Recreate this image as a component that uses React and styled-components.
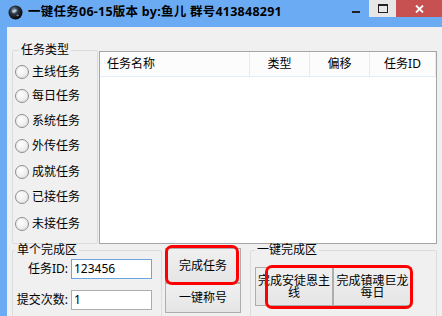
import React from 'react';
import styled, { createGlobalStyle } from 'styled-components';

const Global = createGlobalStyle`
  html, body {
    margin: 0;
    padding: 0;
  }
  body {
    width: 442px;
    height: 316px;
    overflow: hidden;
    font-family: "Noto Sans", "Noto Sans CJK SC", sans-serif;
    font-size: 12px;
    color: #000;
  }
`;

const Window = styled.div`
  display: flex;
  flex-direction: column;
  width: 442px;
  height: 316px;
  background: #6aabf4;
`;

const TitleBar = styled.div`
  display: flex;
  align-items: flex-start;
  height: 27px;
  flex-shrink: 0;
`;

const AppIcon = styled.div`
  display: flex;
  margin: 5px 0 0 8px;
  width: 15px;
  height: 15px;
`;

const Title = styled.div`
  margin: 3px 0 0 5px;
  font-family: "Noto Sans", "Noto Sans CJK SC", sans-serif;
  font-weight: bold;
  font-size: 12.5px;
  letter-spacing: 0.25px;
  line-height: 17px;
  white-space: nowrap;
`;

const Controls = styled.div`
  display: flex;
  margin-left: auto;
  height: 17px;
`;

const CtrlBtn = styled.div`
  display: flex;
  align-items: center;
  justify-content: center;
  width: ${p => p.$w}px;
  height: 17px;
  background: ${p => p.$bg || 'transparent'};
`;

const MinGlyph = styled.div`
  width: 8px;
  height: 2px;
  margin-top: 6px;
  background: #222;
`;

const MaxGlyph = styled.div`
  width: 8px;
  height: 6px;
  border: 1px solid #222;
  border-top-width: 2px;
`;

const Client = styled.div`
  flex: 1;
  margin-left: 7px;
  background: #f0f0f0;
  padding: 16px 5px 0 5px;
  display: flex;
  flex-direction: column;
  overflow: hidden;
`;

const TopRow = styled.div`
  display: flex;
  align-items: flex-start;
  height: 200px;
`;

const Group = styled.fieldset`
  margin: 0;
  padding: 0;
  box-sizing: border-box;
  border: 1px solid #dcdcdc;
  border-radius: 2px;
  width: ${p => p.$w ? `${p.$w}px` : 'auto'};
  flex: ${p => p.$w ? 'none' : 1};
  height: ${p => p.$h}px;
  margin-left: ${p => p.$ml || 0}px;
  min-width: 0;
`;

const Legend = styled.legend`
  margin-left: ${p => p.$ml}px;
  padding: 0 2px;
  font-size: 12px;
  line-height: 14px;
`;

const RadioList = styled.div`
  display: flex;
  flex-direction: column;
  padding: 3px 0 0 2px;
`;

const RadioRow = styled.label`
  display: flex;
  align-items: center;
  gap: 3px;
  height: ${p => p.$h}px;
  line-height: 14px;
`;

const RadioDot = styled.span`
  width: 12px;
  height: 12px;
  border-radius: 50%;
  border: 1px solid #8e8e8e;
  background: radial-gradient(circle at 40% 35%, #ffffff 0%, #f0f0f0 50%, #d8d8d8 100%);
`;

const ListView = styled.div`
  margin: 8px 0 0 1px;
  width: 339px;
  height: 193px;
  box-sizing: border-box;
  border: 1px solid #a5a5a5;
  background: #fff;
`;

const HeaderRow = styled.div`
  display: flex;
  height: 24px;
  background: #fcfcfd;
  border-bottom: 1px solid #e4ecf7;
`;

const HeaderCell = styled.div`
  display: flex;
  align-items: center;
  justify-content: ${p => p.$left ? 'flex-start' : 'center'};
  padding-left: ${p => p.$left ? 7 : 0}px;
  width: ${p => p.$w}px;
  box-sizing: border-box;
  border-right: 1px solid #e3ebf6;
  line-height: 14px;
`;

const BottomRow = styled.div`
  display: flex;
  align-items: flex-start;
`;

const FormBody = styled.div`
  display: flex;
  flex-direction: column;
  gap: 11px;
  padding-top: 2px;
`;

const FormRow = styled.div`
  display: flex;
  align-items: center;
`;

const FieldLabel = styled.span`
  width: 55px;
  margin-right: 3px;
  text-align: right;
  line-height: 14px;
  white-space: nowrap;
`;

const TextBox = styled.div`
  width: 81px;
  height: 20px;
  box-sizing: border-box;
  border: 1px solid ${p => p.$focus ? '#6aa5e0' : '#acacac'};
  background: #fff;
  padding-left: 2px;
  display: flex;
  align-items: center;
  line-height: 14px;
`;

const ButtonCol = styled.div`
  position: relative;
  display: flex;
  flex-direction: column;
  width: 76px;
  margin: 5px 0 0 3px;
`;

const Button = styled.div`
  display: flex;
  align-items: center;
  justify-content: center;
  text-align: center;
  box-sizing: border-box;
  width: ${p => p.$w}px;
  height: ${p => p.$h}px;
  border: 1px solid #adadad;
  background: linear-gradient(#f0f0f0, #e5e5e5);
  font-size: 12px;
  line-height: 12px;
  padding: 0 1px;
  word-break: break-all;
`;

const ButtonPair = styled.div`
  position: relative;
  display: flex;
  padding: 10px 0 0 4px;
`;

const Highlight = styled.div`
  position: absolute;
  left: ${p => p.$x}px;
  top: ${p => p.$y}px;
  width: ${p => p.$w}px;
  height: ${p => p.$h}px;
  box-sizing: border-box;
  border: 3px solid #f00;
  border-radius: 7px;
  pointer-events: none;
`;

const radios = ['主线任务', '每日任务', '系统任务', '外传任务', '成就任务', '已接任务', '未接任务'];
const radioHeights = [24, 24, 25, 26, 25, 26, 27];

const columns = [
  { name: '任务名称', w: 150, left: true },
  { name: '类型', w: 60 },
  { name: '偏移', w: 60 },
  { name: '任务ID', w: 66 },
];

const Globe = () => (
  <svg width="15" height="15" viewBox="0 0 15 15">
    <defs>
      <radialGradient id="g" cx="40%" cy="35%" r="65%">
        <stop offset="0%" stopColor="#8ea4b8" />
        <stop offset="45%" stopColor="#2b3440" />
        <stop offset="100%" stopColor="#050607" />
      </radialGradient>
    </defs>
    <circle cx="7.5" cy="7.5" r="7" fill="url(#g)" />
    <path d="M4 6 Q6 3.5 9 5 Q8 7 6 8 Q4.5 8 4 6Z" fill="#c9d6e2" opacity="0.85" />
    <path d="M8 10 Q10 9 11 10.5 Q9.5 12 8 10Z" fill="#9fb2c4" opacity="0.7" />
  </svg>
);

export default function App() {
  return (
    <>
      <Global />
      <Window>
        <TitleBar>
          <AppIcon><Globe /></AppIcon>
          <Title>一键任务06-15版本 by:鱼儿 群号413848291</Title>
          <Controls>
            <CtrlBtn $w={26}><MinGlyph /></CtrlBtn>
            <CtrlBtn $w={27} $bg="#e6e6e6"><MaxGlyph /></CtrlBtn>
            <CtrlBtn $w={46} $bg="#c75050">
              <svg width="9" height="8" viewBox="0 0 9 8">
                <path d="M1 0.5 L8 7.5 M8 0.5 L1 7.5" stroke="#fff" strokeWidth="1.8" />
              </svg>
            </CtrlBtn>
          </Controls>
        </TitleBar>
        <Client>
          <TopRow>
            <Group $w={86} $h={201}>
              <Legend $ml={6}>任务类型</Legend>
              <RadioList>
                {radios.map((r, i) => (
                  <RadioRow key={r} $h={radioHeights[i]}>
                    <RadioDot />
                    {r}
                  </RadioRow>
                ))}
              </RadioList>
            </Group>
            <ListView>
              <HeaderRow>
                {columns.map(c => (
                  <HeaderCell key={c.name} $w={c.w} $left={c.left}>{c.name}</HeaderCell>
                ))}
              </HeaderRow>
            </ListView>
          </TopRow>
          <BottomRow>
            <Group $w={150} $h={90}>
              <Legend $ml={2}>单个完成区</Legend>
              <FormBody>
                <FormRow>
                  <FieldLabel>任务ID:</FieldLabel>
                  <TextBox $focus>123456</TextBox>
                </FormRow>
                <FormRow>
                  <FieldLabel>提交次数:</FieldLabel>
                  <TextBox>1</TextBox>
                </FormRow>
              </FormBody>
            </Group>
            <ButtonCol>
              <Button $w={76} $h={35}>完成任务</Button>
              <Button $w={76} $h={30}>一键称号</Button>
              <Highlight $x={0} $y={-3} $w={74} $h={40} />
            </ButtonCol>
            <Group $h={90} $ml={9}>
              <Legend $ml={4}>一键完成区</Legend>
              <ButtonPair>
                <Button $w={78} $h={39}>完成安徒恩主线</Button>
                <Button $w={79} $h={39}>完成镇魂巨龙每日</Button>
                <Highlight $x={14} $y={8} $w={148} $h={44} />
              </ButtonPair>
            </Group>
          </BottomRow>
        </Client>
      </Window>
    </>
  );
}
